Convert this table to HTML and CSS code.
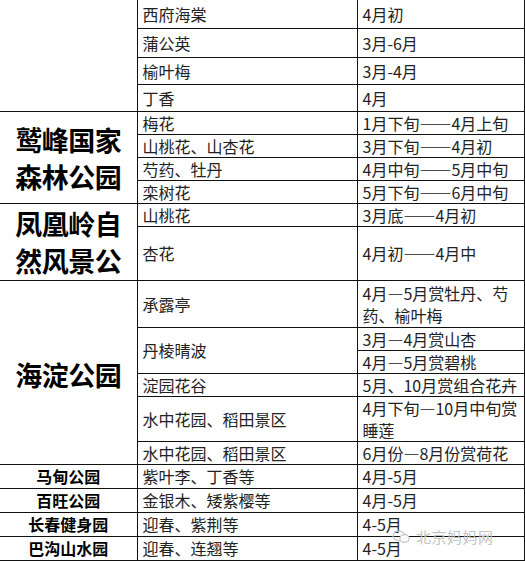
FILE: index.html
```html
<!DOCTYPE html>
<html lang="zh-CN">
<head>
<meta charset="utf-8">
<title>公园赏花时间表</title>
<link rel="stylesheet" href="styles.css">
</head>
<body>
<div class="page">
<table class="t">
<colgroup><col class="c1"><col class="c2"><col class="c3"></colgroup>
<tr class="r28"><td class="park" rowspan="4"></td><td>西府海棠</td><td>4月初</td></tr>
<tr class="r29"><td>蒲公英</td><td>3月-6月</td></tr>
<tr class="r27"><td>榆叶梅</td><td>3月-4月</td></tr>
<tr class="r27"><td>丁香</td><td>4月</td></tr>

<tr class="r23"><td class="park big" rowspan="4"><div class="bigbox b92">鹫峰国家<br>森林公园</div></td><td>梅花</td><td>1月下旬——4月上旬</td></tr>
<tr class="r22"><td>山桃花、山杏花</td><td>3月下旬——4月初</td></tr>
<tr class="r23"><td>芍药、牡丹</td><td>4月中旬——5月中旬</td></tr>
<tr class="r23"><td>栾树花</td><td>5月下旬——6月中旬</td></tr>

<tr class="r23"><td class="park big" rowspan="2"><div class="bigbox b76">凤凰岭自<br>然风景公</div></td><td>山桃花</td><td>3月底——4月初</td></tr>
<tr class="r53"><td>杏花</td><td>4月初——4月中</td></tr>

<tr class="r47"><td class="park big" rowspan="6"><div class="bigone">海淀公园</div></td><td>承露亭</td><td>4月—5月赏牡丹、芍<br>药、榆叶梅</td></tr>
<tr class="r23"><td rowspan="2">丹棱晴波</td><td>3月—4月赏山杏</td></tr>
<tr class="r23"><td>4月—5月赏碧桃</td></tr>
<tr class="r22"><td>淀园花谷</td><td>5月、10月赏组合花卉</td></tr>
<tr class="r45"><td>水中花园、稻田景区</td><td>4月下旬—10月中旬赏<br>睡莲</td></tr>
<tr class="r23"><td>水中花园、稻田景区</td><td>6月份—8月份赏荷花</td></tr>

<tr class="r24"><td class="park small">马甸公园</td><td>紫叶李、丁香等</td><td>4月-5月</td></tr>
<tr class="r24"><td class="park small">百旺公园</td><td>金银木、矮紫樱等</td><td>4月-5月</td></tr>
<tr class="r24"><td class="park small">长春健身园</td><td>迎春、紫荆等</td><td>4-5月</td></tr>
<tr class="r24"><td class="park small">巴沟山水园</td><td>迎春、连翘等</td><td>4-5月</td></tr>
</table>

<div class="wm">
<svg class="wm-icon" width="18" height="14" viewBox="0 0 18 14" fill="none" stroke="#c4c4c4" stroke-width="1.2">
<ellipse cx="7" cy="6" rx="6" ry="4.8"/>
<ellipse cx="12.5" cy="8.5" rx="4.6" ry="3.8" fill="#fff"/>
<circle cx="11" cy="8" r="0.6" fill="#c4c4c4" stroke="none"/>
<circle cx="14" cy="8" r="0.6" fill="#c4c4c4" stroke="none"/>
</svg>
<span class="wm-text">北京妈妈网</span>
</div>
</div>
</body>
</html>
```

FILE: styles.css
```css
html, body {
  margin: 0;
  padding: 0;
  background: #fff;
}

.page {
  position: relative;
  width: 525px;
  height: 561px;
  overflow: hidden;
}

.t {
  border-collapse: collapse;
  table-layout: fixed;
  width: 524px;
}

.c1 { width: 137px; }
.c2 { width: 220px; }
.c3 { width: 167px; }

.t td {
  border: 1px solid #111;
  padding: 0 0 0 5px;
  font-family: "Noto Sans CJK SC", "Liberation Sans", sans-serif;
  font-size: 16px;
  line-height: 22px;
  color: #222;
  vertical-align: middle;
  white-space: nowrap;
  overflow: hidden;
}

.t tr:first-child td {
  border-top: none;
}

.t td.park {
  border-left: none;
  padding: 0;
  text-align: center;
  color: #000;
}

.t td.big {
  vertical-align: top;
}

.bigbox {
  overflow: hidden;
  font-size: 27px;
  font-weight: 700;
  line-height: 37px;
  letter-spacing: -0.5px;
  color: #000;
}

.b92 {
  height: 91px;
  padding-top: 9px;
  box-sizing: border-box;
}

.b76 {
  height: 76px;
  padding-top: 1px;
  box-sizing: border-box;
}

.bigone {
  font-size: 27px;
  font-weight: 700;
  line-height: 37px;
  letter-spacing: -0.5px;
  padding-top: 75px;
}

.t td.small {
  font-size: 16px;
  font-weight: 700;
  line-height: 22px;
}

.r22 { height: 22px; }
.r23 { height: 23px; }
.r24 { height: 24px; }
.r27 { height: 27px; }
.r28 { height: 28px; }
.r29 { height: 29px; }
.r45 { height: 45px; }
.r47 { height: 47px; }
.r53 { height: 53px; }

.wm {
  position: absolute;
  left: 392px;
  top: 528px;
  display: flex;
  align-items: center;
  gap: 6px;
  pointer-events: none;
}

.wm-text {
  font-family: "Noto Sans CJK SC", sans-serif;
  font-size: 15px;
  line-height: 18px;
  color: #c4c4c4;
  letter-spacing: 0.5px;
}
```
